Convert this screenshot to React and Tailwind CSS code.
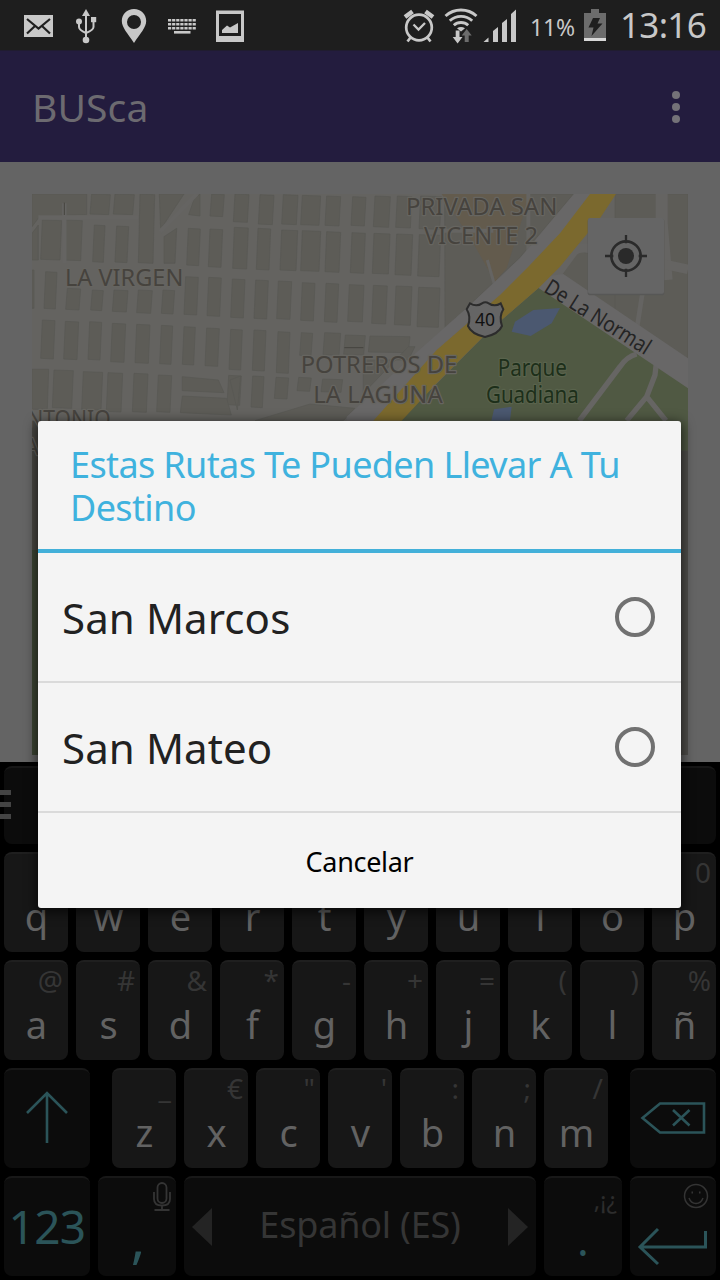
const LETTER_ROWS = [
  [['q', '1'], ['w', '2'], ['e', '3'], ['r', '4'], ['t', '5'], ['y', '6'], ['u', '7'], ['i', '8'], ['o', '9'], ['p', '0']],
  [['a', '@'], ['s', '#'], ['d', '&'], ['f', '*'], ['g', '-'], ['h', '+'], ['j', '='], ['k', '('], ['l', ')'], ['ñ', '%']],
];

const BOTTOM_LETTERS = [['z', '_'], ['x', '€'], ['c', '"'], ['v', "'"], ['b', ':'], ['n', ';'], ['m', '/']];

const ROUTES = ['San Marcos', 'San Mateo'];

// City blocks: [x, y, width, height], map units are a third of a pixel
const BLOCKS = [
  [275, 42, 56, 62], [345, 42, 58, 62], [420, 42, 44, 208], [635, 42, 38, 68], [705, 42, 42, 85], [780, 44, 42, 90], [850, 44, 44, 90], [907, 46, 55, 90], [980, 48, 42, 90], [1058, 50, 40, 88], [1125, 48, 46, 94], [1192, 48, 44, 96], [1262, 48, 62, 100],
  [127, 120, 58, 120], [197, 120, 50, 122], [283, 135, 32, 112], [350, 138, 36, 110], [565, 145, 36, 112], [630, 147, 38, 115], [703, 142, 42, 125], [774, 145, 38, 125], [845, 150, 48, 122], [907, 152, 55, 122], [980, 155, 42, 122], [1056, 158, 40, 122], [1122, 160, 48, 122], [1190, 162, 48, 124], [1258, 164, 64, 126],
  [137, 275, 34, 112], [202, 325, 40, 65], [277, 330, 33, 62], [342, 330, 42, 66], [415, 330, 42, 70], [489, 330, 35, 72], [557, 290, 38, 115], [626, 292, 38, 117], [697, 297, 38, 117], [767, 300, 38, 117], [835, 303, 40, 115], [907, 308, 38, 115], [978, 310, 38, 117], [1048, 314, 44, 112], [1120, 316, 42, 116], [1188, 318, 48, 118], [1256, 322, 64, 120],
  [127, 420, 38, 117], [196, 424, 40, 115], [269, 425, 36, 115], [337, 430, 40, 117], [410, 433, 40, 117], [484, 436, 34, 117], [552, 440, 34, 115], [620, 444, 38, 115], [692, 448, 35, 122], [762, 450, 36, 123], [834, 455, 36, 125], [904, 458, 34, 70], [974, 458, 48, 68], [1036, 465, 60, 60], [1110, 468, 120, 50],
  [162, 570, 58, 115], [250, 575, 58, 115], [324, 578, 44, 118], [402, 580, 42, 117], [475, 585, 40, 112], [686, 586, 38, 90], [758, 588, 34, 95], [828, 592, 38, 65], [896, 592, 38, 42], [968, 597, 60, 40],
];

function StatusBar() {
  return (
    <div className="flex h-[50px] shrink-0 items-center bg-[#1e1e1e] text-[#c8c8c8]">
      <svg className="h-[50px] w-[260px]" viewBox="0 0 260 50" fill="#c8c8c8">
        {/* mail */}
        <rect x="24" y="15" width="29" height="22" />
        <path d="M27 19 L38.500 28.500 L50 19 M27 33.500 L35 26 M50 33.500 L42 26" fill="none" stroke="#1e1e1e" strokeWidth="2.200" />
        {/* usb */}
        <path d="M86 40V13M79 22v5q0 3 7 6M93.500 20v7q0 3-7.500 6" fill="none" stroke="#c8c8c8" strokeWidth="2" />
        <path d="M82 16 L86 9 L90 16Z" />
        <circle cx="79" cy="21.500" r="3" />
        <rect x="91" y="17" width="5.200" height="5.200" />
        <circle cx="86" cy="40" r="3.300" />
        {/* location */}
        <path fillRule="evenodd" d="M134 9c-7 0-12.200 5.200-12.200 12 0 6.500 6 12.500 12.200 22 6.200-9.500 12.200-15.500 12.200-22 0-6.800-5.200-12-12.200-12Zm0 6a7 7 0 1 1 0 14 7 7 0 0 1 0-14Z" />
        {/* keyboard */}
        <path d="M168 20.300H196M168 24.300H196M168 28.300H196" stroke="#c8c8c8" strokeWidth="2.600" strokeDasharray="3.200 .9" />
        <rect x="174" y="31" width="16.500" height="2.600" />
        {/* picture */}
        <path fillRule="evenodd" d="M216 10.500h28V42h-28ZM219 14v22h22V14Z" />
        <path d="M222 33v-3l5-4.500 3 2 8-4.500v10Z" />
      </svg>
      <svg className="ml-[140px] h-[50px] w-[120px]" viewBox="400 0 120 50" fill="none" stroke="#c8c8c8">
        {/* alarm */}
        <circle cx="419" cy="27.500" r="12.800" strokeWidth="2.700" />
        <path d="M413.500 24.500l5 5 6.500-6.500" strokeWidth="2.300" />
        <path d="M405 17l7.500-5.500M433 17l-7.500-5.500" strokeWidth="4.500" />
        <path d="M410.500 37.500l-3 4M427.500 37.500l3 4" strokeWidth="2.700" />
        {/* wifi */}
        <path d="M445.500 16a23 23 0 0 1 31 0M449.800 20.800a16.500 16.500 0 0 1 22.400 0M453.800 25.300a10.500 10.500 0 0 1 14.400 0" strokeWidth="2.900" />
        <path d="M457 28.300q4-2.500 8 0l-4 3.200Z" fill="#c8c8c8" stroke="none" />
        <path d="M455.700 30.500h3.800v6.500h3l-4.900 6.500-4.900-6.500h3Z" fill="#c8c8c8" stroke="none" />
        <path d="M464.700 42h4v-6.500h3l-5-6.500-5 6.500h3Z" fill="#6c6c6c" stroke="none" />
        {/* signal */}
        <path d="M483.500 42l5-4.500V42ZM493 42V31l5-4v15ZM502 42V23l5-4v23ZM511 42V14l5-4.500V42Z" fill="#c8c8c8" stroke="none" />
      </svg>
      <span className="ml-[10px] w-[50px] pt-1 text-[23px] tracking-[-0.1px]">11%</span>
      <svg className="ml-[3px] h-[50px] w-[24px]" viewBox="582 0 24 50">
        <path d="M583 13h7V9h8v4h7v28h-22Z" fill="#6c6c6c" />
        <rect x="583" y="38" width="22" height="3" fill="#d8d8d8" />
        <path d="M592 18h7l-2.500 5.500h5L590.500 36l2-8.500h-5Z" fill="#1e1e1e" />
      </svg>
      <span className="ml-[13px] text-[35px] leading-[48px] tracking-[-0.7px]">13:16</span>
    </div>
  );
}

function Header() {
  return (
    <div className="flex h-[112px] shrink-0 items-center justify-between border-t border-[#201c30] bg-[#231c3e] pl-[32px] pr-[40px]">
      <h1 className="text-[39px] leading-[46px] tracking-[0.1px] text-[#6c6a70]">BUSca</h1>
      <div className="flex flex-col gap-1">
        <span className="size-2 rounded-full bg-[#747278]" />
        <span className="size-2 rounded-full bg-[#747278]" />
        <span className="size-2 rounded-full bg-[#747278]" />
      </div>
    </div>
  );
}

function MapView() {
  return (
    <svg className="h-[568px] w-[656px]" viewBox="96 42 1968 1704" preserveAspectRatio="none">
      <rect x="96" y="42" width="1968" height="1704" fill="#646360" />
      <g fill="#5d5c57" stroke="#585753" strokeWidth="2">
        {BLOCKS.map(([x, y, w, h]) => (
          <polygon key={`${x}-${y}`} points={`${x},${y} ${x + w},${y + 2} ${x + w - 5},${y + h} ${x - 5},${y + h - 2}`} />
        ))}
        <path d="M96 42H260V104L120 108 96 140Z" />
        <path d="M96 160L115 135V240H96ZM96 270h6v115h-6ZM96 568h50l-4 120H96Z" />
        <path d="M478 42H552L482 148ZM600 42V108L566 104 582 58ZM492 170L530 145 525 250H492Z" />
        <path d="M547 590L655 600 672 638 547 632ZM547 648L680 655 694 705 541 698ZM690 600L722 588 712 690Z" />
        <path d="M765 722L930 672 1065 685 1030 722Z" />
        {/* large lots beside the highway */}
        <path d="M1334 42H1720L1560 232 1335 445Z" />
        <path d="M1245 500H1225L1090 640V540H1225Z" />
        <path d="M1845 42H2064V1746H1845ZM1660 300L1735 215 2064 262V620Z" />
      </g>
      <path d="M1325 42H1590L1520 265 1485 305 1420 190Z" fill="#635b4d" />
      <g fill="none" stroke="#656462">
        <path d="M1330 152H1480M1585 42V225" strokeWidth="12" />
        <path d="M1462 240L1485 320" strokeWidth="9" />
        <path d="M1985 42V130L2000 300" strokeWidth="36" />
        <path d="M1650 310L1720 215Q1735 200 1770 205L2064 268" strokeWidth="28" />
        <path d="M1935 290L1910 450" strokeWidth="14" />
        <path d="M193 70V250M115 112H415M480 155L590 42" strokeWidth="13" />
      </g>
      <path d="M193 68V105M1033 503H1090" stroke="#45443f" strokeWidth="3" />

      {/* park */}
      <path d="M1620 320L2064 590V722H1200L1470 450Z" fill="#505943" />
      <path d="M1535 455L1545 425 1600 390 1680 384 1655 430 1592 468ZM1482 688L1535 680 1530 722H1474Z" fill="#4b5870" />
      <g fill="none" stroke="#666563" strokeWidth="16">
        <path d="M1910 522Q1880 530 1860 560L1738 722" />
        <path d="M1970 540L1965 585 1940 650 1880 722M1940 650L1998 722" />
      </g>
      <path d="M1645 288L1690 282 2064 535V625L1920 528 1610 320Z" fill="#686767" />

      {/* highway 40 */}
      <path d="M1722 42L1560 235 1410 375 1230 535 1040 710V722H1140L1390 500 1590 300 1775 42Z" fill="#686767" />
      <path d="M1770 42L1680 160 1585 260 1500 345 1310 510 1120 722H1205L1310 610 1470 450 1620 320 1680 260 1800 115 1848 42Z" fill="#7b692e" />

      <rect x="96" y="722" width="30" height="430" fill="#4a4944" />
      <rect x="96" y="1110" width="30" height="636" fill="#3d4634" />
      <rect x="2034" y="722" width="30" height="90" fill="#505943" />
      <rect x="2034" y="812" width="30" height="913" fill="#4f4e4a" />
      <rect x="96" y="1725" width="1968" height="21" fill="#646464" />

      {/* place names */}
      <g fontSize="71" fill="#46433e" stroke="#666560" strokeWidth="7" paintOrder="stroke" strokeLinejoin="round">
        <text x="195" y="318" textLength="355" lengthAdjust="spacingAndGlyphs">LA VIRGEN</text>
        <text x="1218" y="105" textLength="454" lengthAdjust="spacingAndGlyphs">PRIVADA SAN</text>
        <text x="1272" y="191" textLength="342" lengthAdjust="spacingAndGlyphs">VICENTE 2</text>
        <text x="902" y="580" textLength="470" lengthAdjust="spacingAndGlyphs">POTREROS DE</text>
        <text x="940" y="668" textLength="388" lengthAdjust="spacingAndGlyphs">LA LAGUNA</text>
        <text x="82" y="740" textLength="250" lengthAdjust="spacingAndGlyphs">NTONIO</text>
        <text x="72" y="825">A</text>
      </g>
      <g fontSize="69" fill="#1d2f1a" stroke="#59634c" strokeWidth="7" paintOrder="stroke" strokeLinejoin="round">
        <text x="1493" y="588" textLength="208" lengthAdjust="spacingAndGlyphs">Parque</text>
        <text x="1458" y="670" textLength="278" lengthAdjust="spacingAndGlyphs">Guadiana</text>
      </g>
      <text transform="translate(1628 334) rotate(32)" fontSize="66" textLength="362" lengthAdjust="spacingAndGlyphs" fill="#242424">De La Normal</text>

      <path d="M1410 370q20 12 36 0 10-6 20 0 18 12 36 0l8 18q-14 22-4 50-10 24-51 33-41-9-51-33 10-28-4-50Z" fill="#656565" stroke="#2c2c2c" strokeWidth="6" />
      <text x="1425" y="438" fontSize="54" textLength="60" lengthAdjust="spacingAndGlyphs" fill="#111">40</text>

      {/* my location */}
      <rect x="1763" y="116" width="230" height="230" rx="6" fill="#575756" />
      <rect x="1764" y="114" width="228" height="227" rx="6" fill="#656565" />
      <circle cx="1878" cy="228" r="44" fill="none" stroke="#2a2a2a" strokeWidth="8" />
      <circle cx="1878" cy="228" r="24" fill="#2a2a2a" />
      <path d="M1878 165V190M1878 266V291M1815 228H1840M1916 228H1941" stroke="#2a2a2a" strokeWidth="7" />
    </svg>
  );
}

function LetterKey({ label, hint }) {
  return (
    <div className="flex h-[100px] w-[64px] flex-col rounded-lg border-t-2 border-[#1f1f1f] bg-[#171717]">
      <span className="h-[39px] pr-[5px] text-right text-[28px] leading-[36px] text-[#353535]">{hint}</span>
      <span className="pl-px text-center text-[38px] leading-[46px] text-[#626262]">{label}</span>
    </div>
  );
}

function FunctionKey({ className = '', children }) {
  return (
    <div className={`h-[100px] rounded-lg border-t-2 border-[#181818] bg-[#0c0c0c] ${className}`}>
      {children}
    </div>
  );
}

function Keyboard() {
  return (
    <div className="flex h-[518px] shrink-0 flex-col gap-2 bg-black px-1 pt-1">
      <div className="h-[78px] rounded-lg border-t-2 border-[#161616] bg-[#0c0c0c]">
        <div className="-ml-1 flex w-[11px] flex-col gap-[7px] pt-[22px]">
          <span className="h-[5px] bg-[#444]" />
          <span className="h-[5px] bg-[#444]" />
          <span className="h-[5px] bg-[#444]" />
        </div>
      </div>

      {LETTER_ROWS.map((row) => (
        <div key={row[0][0]} className="flex gap-2">
          {row.map(([label, hint]) => (
            <LetterKey key={label} label={label} hint={hint} />
          ))}
        </div>
      ))}

      <div className="flex justify-between">
        <FunctionKey className="w-[86px]">
          <svg className="h-[98px] w-[86px]" viewBox="0 0 86 98" fill="none" stroke="#2b5459" strokeWidth="2.600">
            <path d="M43 73V23M23 43L43 23 63 43" />
          </svg>
        </FunctionKey>
        <div className="flex gap-2">
          {BOTTOM_LETTERS.map(([label, hint]) => (
            <LetterKey key={label} label={label} hint={hint} />
          ))}
        </div>
        <FunctionKey className="w-[86px]">
          <svg className="h-[98px] w-[86px]" viewBox="0 0 86 98" fill="none" stroke="#2b5459" strokeWidth="2.600">
            <path d="M12.500 48L30 33.500H74V62.500H30ZM43 40L59.500 55.500M59.500 40L43 55.500" />
          </svg>
        </FunctionKey>
      </div>

      <div className="flex gap-2">
        <FunctionKey className="w-[86px] text-center text-[46px] leading-[96px] tracking-[-0.6px] text-[#2b5459]">123</FunctionKey>
        <FunctionKey className="flex w-[78px] flex-col">
          <svg className="ml-[54px] mt-[4px] h-[30px] w-[20px] shrink-0" viewBox="0 0 20 30" fill="none" stroke="#343434" strokeWidth="1.800">
            <rect x="5.500" y="1" width="9" height="20" rx="4.500" />
            <path d="M2 10v7q0 6.500 8 6.500t8-6.500v-7M10 23.500V28M2.500 28H17.500" />
          </svg>
          <span className="pl-[2px] text-center text-[54px] leading-[50px] text-[#2b5459]">,</span>
        </FunctionKey>
        <FunctionKey className="flex w-[352px] items-center justify-between px-[8px] text-[36px] text-[#353535]">
          <svg className="h-[38px] w-[20px]" viewBox="0 0 20 38" fill="#242424">
            <path d="M0 19L20 0V38Z" />
          </svg>
          <span className="-mt-1 tracking-[-0.2px]">Español (ES)</span>
          <svg className="h-[38px] w-[20px]" viewBox="0 0 20 38" fill="#242424">
            <path d="M20 19L0 0V38Z" />
          </svg>
        </FunctionKey>
        <FunctionKey className="flex w-[78px] flex-col">
          <span className="h-[34px] pr-[5px] text-right text-[24px] leading-[44px] text-[#2d2d2d]">,¡¿</span>
          <span className="text-center text-[44px] leading-[54px] text-[#2b5459]">.</span>
        </FunctionKey>
        <FunctionKey className="w-[86px]">
          <svg className="h-[98px] w-[86px]" viewBox="0 0 86 98" fill="none">
            <g stroke="#343434" strokeWidth="1.500">
              <circle cx="66" cy="18" r="11.500" />
              <path d="M59 20q2 5.500 7 5.500t7-5.500" />
              <path d="M61.500 14.500h1.500M69 14.500h1.500" strokeWidth="2" />
            </g>
            <path d="M28 51L10 69 28 86M10 69H75.500V53" stroke="#2b5459" strokeWidth="3" />
          </svg>
        </FunctionKey>
      </div>
    </div>
  );
}

function RouteDialog() {
  return (
    <div className="absolute left-[38px] top-[421px] flex h-[487px] w-[643px] flex-col rounded-[3px] bg-[#f4f4f4] shadow-[0_3px_12px_2px_rgba(0,0,0,0.6)]">
      <h2 className="h-[132px] border-b-4 border-[#43b0d9] pl-[32px] pr-[20px] pt-[22px] text-[36px] leading-[43px] tracking-[-0.62px] text-[#3fb2de]">
        Estas Rutas Te Pueden Llevar A Tu Destino
      </h2>
      {ROUTES.map((route) => (
        <button key={route} className="flex h-[130px] items-center justify-between border-b-2 border-[#dadada] pl-[24px] pr-[26px] text-[42px] tracking-[0.1px] text-[#212121]">
          <span>{route}</span>
          <span className="size-[40px] rounded-full border-4 border-[#717171]" />
        </button>
      ))}
      <button className="flex-1 pt-1 text-[27px] tracking-[-0.3px] text-black">Cancelar</button>
    </div>
  );
}

export default function App() {
  return (
    <div className="relative flex h-[1280px] w-[720px] flex-col overflow-hidden bg-[#646464] font-['Noto_Sans',sans-serif]">
      <StatusBar />
      <Header />
      <div className="h-[600px] shrink-0 px-[32px] pt-[32px]">
        <MapView />
      </div>
      <Keyboard />
      <RouteDialog />
    </div>
  );
}
